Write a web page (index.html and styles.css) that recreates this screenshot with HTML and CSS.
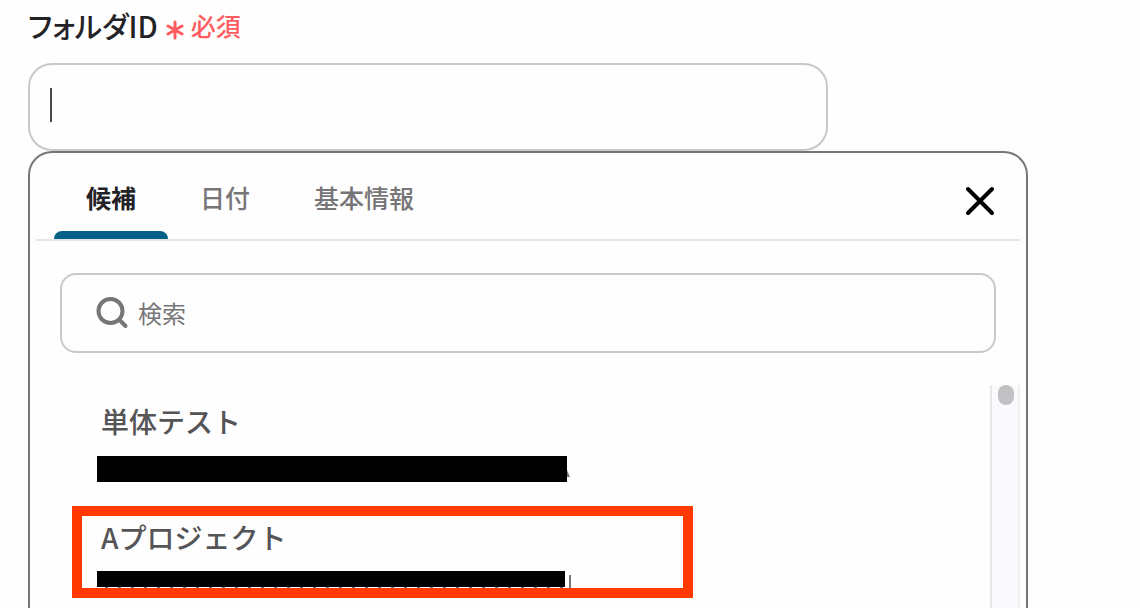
FILE: index.html
```html
<!DOCTYPE html>
<html lang="ja">
<head>
<meta charset="utf-8">
<meta name="viewport" content="width=device-width, initial-scale=1">
<title>フォルダID</title>
<link rel="stylesheet" href="styles.css">
</head>
<body>
<main class="page">
  <div class="field">
    <div class="field-head">
      <label class="field-label" for="folder-id">フォルダID</label>
      <span class="required">
        <svg class="required-mark" viewBox="0 0 18 20" aria-hidden="true"><path d="M9 2v16M2 6l14 8M16 6L2 14"/></svg>
        必須
      </span>
    </div>
    <div class="field-box">
      <input class="field-input" id="folder-id" type="text" required>
      <span class="caret"></span>
    </div>
  </div>

  <section class="panel">
    <div class="panel-head">
      <div class="tabs" role="tablist">
        <button class="tab tab-active" type="button" role="tab" aria-selected="true">候補</button>
        <button class="tab" type="button" role="tab" aria-selected="false">日付</button>
        <button class="tab" type="button" role="tab" aria-selected="false">基本情報</button>
      </div>
      <button class="close" type="button" aria-label="閉じる">
        <svg class="close-icon" viewBox="0 0 32 32" aria-hidden="true"><path d="M4 4l24 24M28 4L4 28"/></svg>
      </button>
    </div>

    <label class="search">
      <svg class="search-icon" viewBox="0 0 34 34" aria-hidden="true"><circle cx="15.500" cy="15" r="12"/><path d="M24.500 24l6 6"/></svg>
      <input class="search-input" type="search" placeholder="検索" aria-label="検索">
    </label>

    <div class="results">
      <ul class="list">
        <li class="item">
          <span class="item-name">単体テスト</span>
          <span class="redacted redacted-full"></span>
        </li>
        <li class="item item-marked">
          <span class="item-name">Aプロジェクト</span>
          <span class="redacted redacted-cut"></span>
        </li>
      </ul>
      <div class="scroll-track"><div class="scroll-thumb"></div></div>
    </div>
  </section>
</main>
</body>
</html>
```

FILE: styles.css
```css
*,
*::before,
*::after {
  box-sizing: border-box;
}

body {
  margin: 0;
  background: #fefefe;
  color: #232226;
  font-family: "Noto Sans CJK JP", sans-serif;
}

button,
input {
  font: inherit;
  color: inherit;
}

.page {
  display: flex;
  flex-direction: column;
  height: 100vh;
  padding: 7px 28px 0;
  overflow: hidden;
}

.field {
  max-width: 800px;
}

.field-head {
  display: flex;
  align-items: center;
  gap: 8px;
  height: 36px;
  margin-bottom: 20px;
}

.field-label {
  font-size: 29px;
  line-height: 36px;
  font-weight: 500;
  font-feature-settings: "palt";
}

.required {
  display: flex;
  align-items: center;
  gap: 7px;
  color: #ff5c60;
  font-size: 25px;
  line-height: 36px;
  font-weight: 500;
}

.required-mark {
  width: 18px;
  height: 20px;
  margin-top: 9px;
  fill: none;
  stroke: currentColor;
  stroke-width: 3;
  stroke-linecap: round;
}

.field-box {
  position: relative;
}

.field-input {
  display: block;
  width: 100%;
  height: 88px;
  padding: 0 20px;
  border: 2px solid #c9c8ca;
  border-radius: 24px;
  background: transparent;
  font-size: 28px;
  outline: 0;
}

.caret {
  position: absolute;
  left: 22px;
  top: 25px;
  width: 2px;
  height: 34px;
  background: #49484b;
}

.panel {
  display: flex;
  flex: 1;
  flex-direction: column;
  max-width: 1000px;
  min-height: 0;
  border: 2px solid #767578;
  border-bottom: 0;
  border-radius: 24px 24px 0 0;
}

.panel-head {
  display: flex;
  justify-content: space-between;
  height: 88px;
  margin: 0 6px;
  padding: 0 24px 0 18px;
  border-bottom: 2px solid #e5e4e6;
}

.tabs {
  display: flex;
}

.tab {
  position: relative;
  padding: 2px 32px 0;
  border: 0;
  background: none;
  color: #767578;
  font-size: 25px;
  line-height: 36px;
  font-weight: 500;
}

.tab-active {
  color: #232226;
  font-weight: 700;
}

.tab-active::after {
  content: "";
  position: absolute;
  right: 0;
  bottom: 0;
  left: 0;
  height: 8px;
  border-radius: 8px 8px 0 0;
  background: #006087;
}

.close {
  display: flex;
  align-items: center;
  padding: 10px 0 0;
  border: 0;
  background: none;
  color: #000;
}

.close-icon {
  width: 32px;
  height: 32px;
  fill: none;
  stroke: currentColor;
  stroke-width: 4;
  stroke-linecap: round;
}

.search {
  display: flex;
  flex: none;
  align-items: center;
  gap: 9px;
  height: 80px;
  margin: 32px 30px;
  padding: 0 33px;
  border: 2px solid #c9c8ca;
  border-radius: 16px;
}

.search-icon {
  flex: none;
  width: 34px;
  height: 34px;
  fill: none;
  stroke: #767578;
  stroke-width: 4;
  stroke-linecap: round;
}

.search-input {
  flex: 1;
  min-width: 0;
  padding: 0;
  border: 0;
  background: none;
  font-size: 24px;
  line-height: 36px;
  outline: 0;
}

.search-input::placeholder {
  color: #767578;
  opacity: 1;
}

.results {
  display: flex;
  flex: 1;
  min-height: 0;
  margin-right: 6px;
  overflow: hidden;
}

.list {
  flex: 1;
  margin: 0;
  padding: 5px 0 0;
  list-style: none;
}

.item {
  position: relative;
  display: flex;
  flex-direction: column;
  gap: 15px;
  height: 116px;
  padding: 11px 67px 0;
}

.item-name {
  padding-left: 4px;
  color: #555457;
  font-size: 28px;
  line-height: 40px;
  font-weight: 500;
}

.redacted {
  position: relative;
  max-width: 470px;
  height: 26px;
  background: #000;
}

.redacted::after {
  content: "";
  position: absolute;
  background: #767578;
}

.redacted-full::after {
  left: 100%;
  top: 14px;
  width: 3px;
  height: 7px;
  clip-path: polygon(0 0, 100% 100%, 0 100%);
}

.redacted-cut {
  max-width: 468px;
  height: 16px;
  margin-top: -1px;
}

.redacted-cut::before {
  content: "";
  position: absolute;
  top: 100%;
  left: 8px;
  right: 0;
  height: 1px;
  background: repeating-linear-gradient(90deg, #767578 0 3px, transparent 3px 13px);
}

.redacted-cut::after {
  left: calc(100% + 4px);
  top: 4px;
  width: 2px;
  height: 13px;
}

.item-marked::after {
  content: "";
  position: absolute;
  top: 0;
  left: 42px;
  width: 621px;
  height: 92px;
  border: 10px solid #ff3900;
}

.scroll-track {
  display: flex;
  justify-content: center;
  width: 30px;
  padding-left: 2px;
  border: solid #e8e7e9;
  border-width: 0 2px;
  border-right-color: #f0eff1;
  background: #faf9fc;
}

.scroll-thumb {
  width: 16px;
  height: 20px;
  border-radius: 8px;
  background: #c1c0c2;
}
```
